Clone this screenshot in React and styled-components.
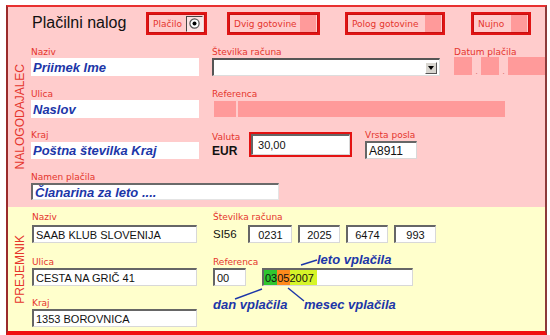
import React from 'react';
import styled, { createGlobalStyle } from 'styled-components';

const Global = createGlobalStyle`
  html, body { margin: 0; padding: 0; background: #ffffff; }
  body { font-family: "Liberation Sans", Arial, sans-serif; }
  * { box-sizing: border-box; }
`;

const RED = '#e5352c';
const BLUE = '#1c36a8';

const Frame = styled.div`
  margin: 5px 0 0 6px;
  width: 541px;
  border-top: 2px solid #e83030;
  border-left: 2px solid #9a2b2b;
  border-right: 2px solid #8c3a3a;
  border-bottom: 4px solid #f01010;
  display: flex;
  flex-direction: column;
`;

const Section = styled.section`
  height: ${p => p.$h}px;
  background: ${p => p.$bg};
  display: flex;
  flex-direction: column;
`;

const Header = styled.div`
  height: 39px;
  display: flex;
  align-items: flex-start;
  padding: 5px 0 0 24px;
`;

const Title = styled.div`
  width: 114px;
  height: 22px;
  line-height: 22px;
  font-size: 16px;
  color: #111;
`;

const OptionBox = styled.div`
  width: ${p => p.$w}px;
  margin-left: ${p => p.$ml || 0}px;
  height: 23px;
  border: 2px solid #e01414;
  box-shadow: inset 0 0 0 1px #c81010;
  display: flex;
  align-items: center;
  justify-content: space-between;
  padding: 0 2px 0 5px;
  font-family: "DejaVu Sans", Verdana, sans-serif;
  font-size: 9px;
  color: ${RED};
  white-space: nowrap;
`;

const CheckSquare = styled.span`
  flex-shrink: 0;
  width: 16px;
  height: 17px;
  background: #ff9a9a;
`;

const RadioBox = styled.span`
  flex-shrink: 0;
  width: 17px;
  height: 16px;
  border: 1px solid #444;
  border-right-color: #eee;
  border-bottom-color: #eee;
  background: #fbe4e4;
  display: flex;
  align-items: center;
  justify-content: center;
`;

const Body = styled.div`
  flex: 1;
  display: flex;
`;

const Side = styled.div`
  width: 24px;
  display: flex;
  align-items: center;
  justify-content: center;
  padding-bottom: ${p => p.$pb || 0}px;
`;

const SideText = styled.span`
  writing-mode: vertical-rl;
  transform: rotate(180deg);
  font-size: 12px;
  color: ${RED};
`;

const Fields = styled.div`
  flex: 1;
  display: flex;
  flex-direction: column;
  padding-top: ${p => p.$pt || 0}px;
`;

const Row = styled.div`
  display: flex;
  align-items: flex-start;
  margin-top: ${p => p.$mt || 0}px;
`;

const Field = styled.div`
  position: relative;
  display: flex;
  flex-direction: column;
  width: ${p => (p.$w ? `${p.$w}px` : 'auto')};
  margin-left: ${p => p.$ml || 0}px;
`;

const Label = styled.div`
  height: 12px;
  line-height: 12px;
  font-family: "DejaVu Sans", Verdana, sans-serif;
  font-size: 9px;
  color: ${RED};
  margin-top: ${p => p.$mt || 0}px;
  margin-bottom: ${p => p.$mb || 0}px;
  white-space: nowrap;
`;

const NameBox = styled.div`
  width: ${p => p.$w}px;
  height: ${p => p.$h || 18}px;
  background: #ffffff;
  padding-left: 2px;
  display: flex;
  align-items: center;
  font-size: 13px;
  font-weight: bold;
  font-style: italic;
  color: ${BLUE};
  white-space: nowrap;
  ${p => p.$inset && `
    border-top: 2px solid #6a6a6a;
    border-left: 2px solid #6a6a6a;
    border-right: 1px solid #e4e4e4;
    border-bottom: 1px solid #e4e4e4;
  `}
`;

const Input = styled.div`
  width: ${p => p.$w}px;
  height: ${p => p.$h || 18}px;
  background: #ffffff;
  border-top: 2px solid #666;
  border-left: 2px solid #666;
  border-right: 1px solid #d8d8d8;
  border-bottom: 1px solid #d8d8d8;
  display: flex;
  align-items: center;
  justify-content: ${p => (p.$center ? 'center' : 'flex-start')};
  padding-left: ${p => (p.$center ? 0 : 2)}px;
  font-size: ${p => p.$fs || 11}px;
  color: #111;
  white-space: nowrap;
  overflow: hidden;
`;

const SelectBox = styled.div`
  width: ${p => p.$w}px;
  height: 18px;
  background: #fff;
  border-top: 2px solid #555;
  border-left: 2px solid #555;
  border-right: 1px solid #ddd;
  border-bottom: 1px solid #ddd;
  display: flex;
  align-items: center;
  justify-content: flex-end;
  padding-right: 2px;
`;

const DropButton = styled.span`
  width: 12px;
  height: 12px;
  background: #d8d6d0;
  border: 1px solid #fff;
  border-right-color: #555;
  border-bottom-color: #555;
  display: flex;
  align-items: center;
  justify-content: center;
`;

const DateRow = styled.div`
  display: flex;
  align-items: flex-end;
  margin-top: -1px;
`;

const PinkBox = styled.span`
  width: ${p => p.$w}px;
  height: ${p => p.$h || 18}px;
  margin-left: ${p => p.$ml || 0}px;
  background: #ff9a9a;
  display: block;
`;

const Dot = styled.span`
  width: 9px;
  text-align: center;
  font-size: 8px;
  line-height: 6px;
  color: #c55;
`;

const RefBar = styled.div`
  display: flex;
  margin-top: 1px;
`;

const Currency = styled.div`
  margin-top: 1px;
  font-size: 12px;
  font-weight: bold;
  color: #111;
`;

const AmountWrap = styled.div`
  margin-top: 3px;
  width: 103px;
  height: 25px;
  border: 2px solid #e41212;
`;

const Plain = styled.div`
  font-size: ${p => p.$fs || 11}px;
  color: #111;
  width: ${p => p.$w}px;
`;

const InlineRow = styled.div`
  display: flex;
  align-items: center;
  gap: ${p => p.$gap || 0}px;
  margin-top: ${p => p.$mt || 0}px;
`;

const RefInput = styled.div`
  width: ${p => p.$w}px;
  height: 18px;
  background: #fff;
  border-top: 2px solid #666;
  border-left: 2px solid #666;
  border-right: 1px solid #d8d8d8;
  border-bottom: 1px solid #d8d8d8;
  display: flex;
  align-items: stretch;
  font-size: 11px;
  color: #111;
`;

const Segment = styled.span`
  display: flex;
  align-items: center;
  background: ${p => p.$bg};
  padding: 0 ${p => p.$pr || 0}px 0 ${p => p.$pl || 0}px;
`;

const Callout = styled.span`
  position: absolute;
  left: ${p => p.$x}px;
  top: ${p => p.$y}px;
  font-size: 13px;
  line-height: 16px;
  font-weight: bold;
  font-style: italic;
  color: ${BLUE};
  white-space: nowrap;
`;

const CalloutLines = styled.svg`
  position: absolute;
  left: 0;
  top: 0;
  overflow: visible;
  pointer-events: none;
`;

function Radio() {
  return (
    <svg width="11" height="11" viewBox="0 0 11 11">
      <circle cx="5.5" cy="5.5" r="4.6" fill="#fff" stroke="#555" strokeWidth="1.2" />
      <circle cx="5.5" cy="5.5" r="2" fill="#000" />
    </svg>
  );
}

export default function App() {
  return (
    <>
      <Global />
      <Frame>
        <Section $h={200} $bg="#ffcccc">
          <Header>
            <Title>Plačilni nalog</Title>
            <OptionBox $w={61}>
              Plačilo
              <RadioBox><Radio /></RadioBox>
            </OptionBox>
            <OptionBox $w={93} $ml={20}>
              Dvig gotovine
              <CheckSquare />
            </OptionBox>
            <OptionBox $w={100} $ml={25}>
              Polog gotovine
              <CheckSquare />
            </OptionBox>
            <OptionBox $w={60} $ml={26}>
              Nujno
              <CheckSquare />
            </OptionBox>
          </Header>
          <Body>
            <Side $pb={20}>
              <SideText>NALOGODAJALEC</SideText>
            </Side>
            <Fields>
              <Row>
                <Field $w={168}>
                  <Label>Naziv</Label>
                  <NameBox $w={168}>Priimek Ime</NameBox>
                </Field>
                <Field $ml={13}>
                  <Label>Številka računa</Label>
                  <SelectBox $w={228}>
                    <DropButton>
                      <svg width="6" height="4" viewBox="0 0 6 4"><path d="M0 0 H6 L3 4 Z" fill="#000" /></svg>
                    </DropButton>
                  </SelectBox>
                </Field>
                <Field $ml={14}>
                  <Label>Datum plačila</Label>
                  <DateRow>
                    <PinkBox $w={18} />
                    <Dot>.</Dot>
                    <PinkBox $w={18} />
                    <Dot>.</Dot>
                    <PinkBox $w={37} />
                  </DateRow>
                </Field>
              </Row>

              <Row $mt={12}>
                <Field $w={168}>
                  <Label>Ulica</Label>
                  <NameBox $w={168}>Naslov</NameBox>
                </Field>
                <Field $ml={13}>
                  <Label>Referenca</Label>
                  <RefBar>
                    <PinkBox $w={22} $h={16} $ml={2} />
                    <PinkBox $w={267} $h={16} $ml={2} />
                  </RefBar>
                </Field>
              </Row>

              <Row $mt={11}>
                <Field $w={168}>
                  <Label $mb={1}>Kraj</Label>
                  <NameBox $w={168} $h={17}>Poštna številka Kraj</NameBox>
                </Field>
                <Field $ml={13} $w={37}>
                  <Label $mt={2}>Valuta</Label>
                  <Currency>EUR</Currency>
                </Field>
                <AmountWrap>
                  <Input $w={99} $h={21} $fs={11}>&nbsp;30,00</Input>
                </AmountWrap>
                <Field $ml={13}>
                  <Label>Vrsta posla</Label>
                  <Input $w={52} $fs={12}>A8911</Input>
                </Field>
              </Row>

              <Row $mt={12}>
                <Field>
                  <Label>Namen plačila</Label>
                  <NameBox $w={248} $h={17} $inset>Članarina za leto ....</NameBox>
                </Field>
              </Row>
            </Fields>
          </Body>
        </Section>

        <Section $h={124} $bg="#ffffcc">
          <Body>
            <Side>
              <SideText>PREJEMNIK</SideText>
            </Side>
            <Fields $pt={4}>
              <Row>
                <Field $w={165}>
                  <Label $mb={2}>Naziv</Label>
                  <Input $w={165}>SAAB KLUB SLOVENIJA</Input>
                </Field>
                <Field $ml={16}>
                  <Label $mb={2}>Številka računa</Label>
                  <InlineRow $gap={6}>
                    <Plain $w={29} $fs={11.5}>SI56</Plain>
                    <Input $w={44} $center>0231</Input>
                    <Input $w={42} $center>2025</Input>
                    <Input $w={42} $center>6474</Input>
                    <Input $w={42} $center>993</Input>
                  </InlineRow>
                </Field>
              </Row>

              <Row $mt={13}>
                <Field $w={165}>
                  <Label>Ulica</Label>
                  <Input $w={165}>CESTA NA GRIČ 41</Input>
                </Field>
                <Field $ml={16}>
                  <Label>Referenca</Label>
                  <InlineRow $gap={16}>
                    <Input $w={33}>00</Input>
                    <RefInput $w={151}>
                      <Segment $bg="#2fc62f" $pl={1}>03</Segment>
                      <Segment $bg="#ff8a1c">05</Segment>
                      <Segment $bg="#d6f529" $pr={3}>2007</Segment>
                    </RefInput>
                  </InlineRow>
                  <CalloutLines width="200" height="60">
                    <line x1="88" y1="9" x2="104" y2="4" stroke={BLUE} strokeWidth="1.4" />
                    <line x1="75" y1="32" x2="91" y2="45" stroke={BLUE} strokeWidth="1.4" />
                    <line x1="49" y1="33" x2="22" y2="43" stroke={BLUE} strokeWidth="1.4" />
                  </CalloutLines>
                  <Callout $x={104} $y={-4}>leto vplačila</Callout>
                  <Callout $x={0} $y={41}>dan vplačila</Callout>
                  <Callout $x={91} $y={41}>mesec vplačila</Callout>
                </Field>
              </Row>

              <Row $mt={11}>
                <Field $w={165}>
                  <Label>Kraj</Label>
                  <Input $w={165}>1353 BOROVNICA</Input>
                </Field>
              </Row>
            </Fields>
          </Body>
        </Section>
      </Frame>
    </>
  );
}
